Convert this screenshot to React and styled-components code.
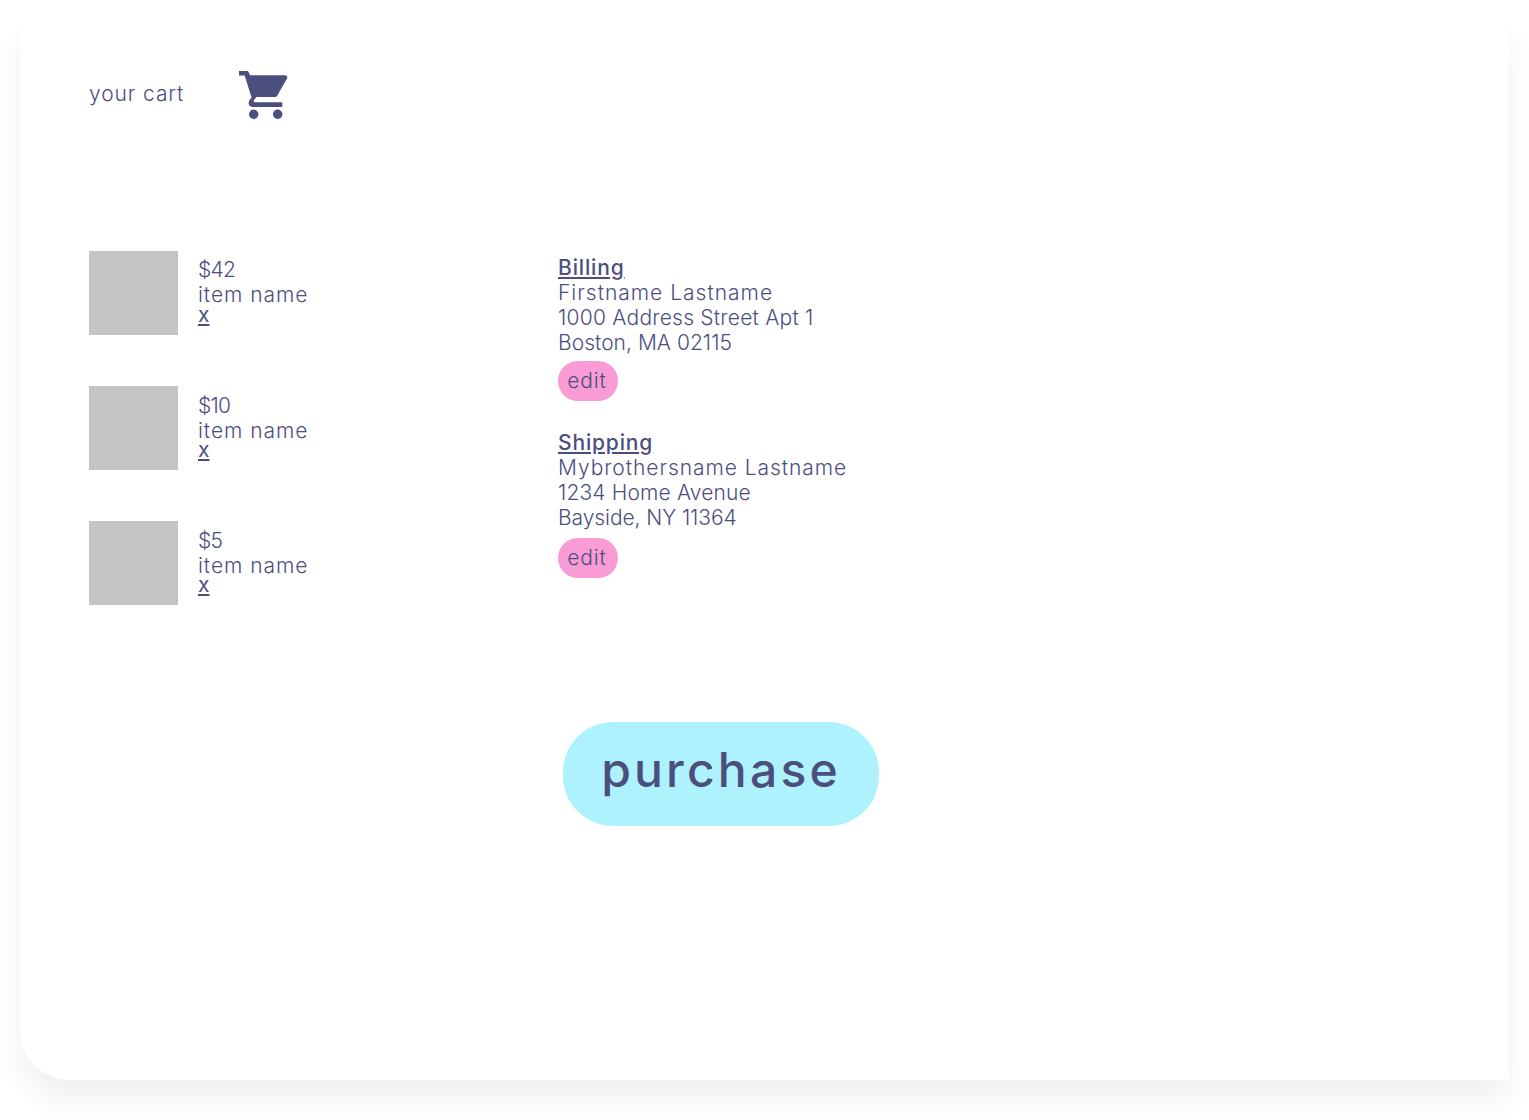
import React from "react";
import styled, { createGlobalStyle } from "styled-components";

const Global = createGlobalStyle`
  html, body { margin: 0; padding: 0; background: #fff; }
  body { font-family: "Inter", "Noto Sans", sans-serif; color: #4c4f7e; -webkit-font-smoothing: antialiased; }
`;

const Page = styled.div`
  width: 1529px;
  height: 1120px;
  padding: 20px 20.5px 40px 20px;
  box-sizing: border-box;
  overflow: hidden;
`;

const Card = styled.main`
  height: 100%;
  background: #fff;
  border-radius: 0 0 0 50px;
  box-shadow: 0 20px 30px rgba(0, 0, 0, 0.06);
  padding: 51px 69px 0;
  box-sizing: border-box;
`;

const Header = styled.header`
  display: flex;
  align-items: center;
  height: 48px;
  gap: 54px;
`;

const CartLabel = styled.span`
  width: 96px;
  padding-bottom: 4px;
  font-size: 21px;
  font-weight: 300;
  letter-spacing: 0.9px;
  line-height: 25px;
  white-space: nowrap;
`;

const Columns = styled.div`
  display: flex;
  margin-top: 132px;
`;

const Items = styled.ul`
  list-style: none;
  margin: 0;
  padding: 0;
  width: 469px;
  display: flex;
  flex-direction: column;
  gap: 50.75px;
`;

const Item = styled.li`
  display: flex;
  align-items: flex-start;
  gap: 20px;
`;

const Thumb = styled.div`
  width: 89px;
  height: 84px;
  background: #c4c4c4;
`;

const ItemText = styled.div`
  padding-top: ${(p) => p.$top}px;
  font-size: 21px;
  font-weight: 300;
  line-height: 25px;
`;

const Remove = styled.a`
  display: block;
  height: ${(p) => p.$height}px;
  line-height: ${(p) => p.$height}px;
  font-weight: 400;
  text-decoration: underline;
`;

const Addresses = styled.div`
  display: flex;
  flex-direction: column;
  gap: 29px;
  padding-top: 4px;
`;

const Address = styled.section`
  font-size: 21px;
  font-weight: 300;
  line-height: 25px;
`;

const Title = styled.h2`
  margin: 0;
  font: inherit;
  font-weight: 500;
  letter-spacing: 0.85px;
  text-decoration: underline;
`;

const Line = styled.div`
  letter-spacing: ${(p) => p.$spacing}px;
`;

const Edit = styled.button`
  display: block;
  width: 60px;
  height: 40px;
  margin-top: ${(p) => p.$gap}px;
  padding: 0 2px 2px 0;
  border: 0;
  border-radius: 20px;
  background: #f99bd5;
  color: inherit;
  font: inherit;
  letter-spacing: 0.9px;
`;

const Purchase = styled.button`
  display: block;
  width: 316px;
  height: 104px;
  margin: 117px 0 0 474px;
  padding: 0 0 8px;
  border: 0;
  border-radius: 50px;
  background: #adf2fc;
  color: #4c4f7e;
  font-family: inherit;
  font-size: 48px;
  font-weight: 500;
  letter-spacing: 3.2px;
`;

const CartIcon = () => (
  <svg width="49" height="48" viewBox="0 0 49 48" fill="#4c4f7e" aria-hidden="true">
    <path d="M0 0H9L11 4.3H46Q49 4.3 48 7.5L38 25Q37.4 26 36 26H17.7L15.2 28.6Q14 31.3 16 31.3H43.3V36H13.5Q9 35.5 9.8 31Q10 29 12.6 26.5L5.6 4.4H0Z" />
    <circle cx="14.7" cy="43.3" r="4.7" />
    <circle cx="38.7" cy="43.3" r="4.7" />
  </svg>
);

const items = [
  { price: "$42", name: "item name", top: 6, xHeight: 15 },
  { price: "$10", name: "item name", top: 7, xHeight: 13 },
  { price: "$5", name: "item name", top: 7, xHeight: 13 },
];

const addresses = [
  {
    title: "Billing",
    gap: 6,
    lines: [
      { text: "Firstname Lastname", spacing: 1 },
      { text: "1000 Address Street Apt 1", spacing: 0.23 },
      { text: "Boston, MA 02115", spacing: 0.03 },
    ],
  },
  {
    title: "Shipping",
    gap: 8,
    lines: [
      { text: "Mybrothersname Lastname", spacing: 0.95 },
      { text: "1234 Home Avenue", spacing: 0.15 },
      { text: "Bayside, NY 11364", spacing: -0.07 },
    ],
  },
];

export default function App() {
  return (
    <Page>
      <Global />
      <Card>
        <Header>
          <CartLabel>your cart</CartLabel>
          <CartIcon />
        </Header>
        <Columns>
          <Items>
            {items.map((it) => (
              <Item key={it.price}>
                <Thumb />
                <ItemText $top={it.top}>
                  <Line $spacing={-0.8}>{it.price}</Line>
                  <Line $spacing={0.95}>{it.name}</Line>
                  <Remove $height={it.xHeight}>x</Remove>
                </ItemText>
              </Item>
            ))}
          </Items>
          <Addresses>
            {addresses.map((a) => (
              <Address key={a.title}>
                <Title>{a.title}</Title>
                {a.lines.map((l) => (
                  <Line key={l.text} $spacing={l.spacing}>{l.text}</Line>
                ))}
                <Edit $gap={a.gap}>edit</Edit>
              </Address>
            ))}
          </Addresses>
        </Columns>
        <Purchase>purchase</Purchase>
      </Card>
    </Page>
  );
}
